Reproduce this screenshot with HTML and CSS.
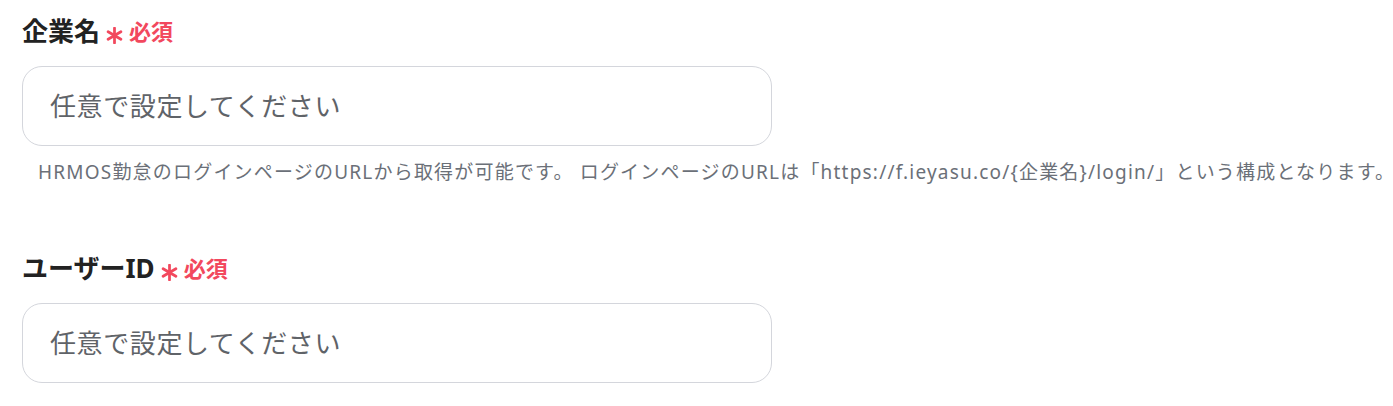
FILE: index.html
```html
<!DOCTYPE html>
<html lang="ja">
<head>
<meta charset="utf-8">
<link rel="stylesheet" href="styles.css">
</head>
<body>
<form class="form">
  <div class="field">
    <label class="label"><span class="label-text">企業名</span><svg class="req-mark" viewBox="0 0 16 16" width="17" height="17" aria-hidden="true"><path d="M8 1v14M2 4.5l12 7M14 4.5l-12 7" stroke="currentColor" stroke-width="2.6" stroke-linecap="round" fill="none"/></svg><span class="req">必須</span></label>
    <input class="input" type="text" placeholder="任意で設定してください">
    <p class="help">HRMOS勤怠のログインページのURLから取得が可能です。 ログインページのURLは「https://f.ieyasu.co/{企業名}/login/」という構成となります。</p>
  </div>
  <div class="field field-second">
    <label class="label"><span class="label-text">ユーザーID</span><svg class="req-mark" viewBox="0 0 16 16" width="17" height="17" aria-hidden="true"><path d="M8 1v14M2 4.5l12 7M14 4.5l-12 7" stroke="currentColor" stroke-width="2.6" stroke-linecap="round" fill="none"/></svg><span class="req">必須</span></label>
    <input class="input" type="text" placeholder="任意で設定してください">
  </div>
</form>
</body>
</html>
```
FILE: styles.css
```css
html, body {
  margin: 0;
  padding: 0;
  background: #ffffff;
  overflow: hidden;
}
body {
  font-family: "Noto Sans", "Noto Sans CJK JP", sans-serif;
  color: #222;
}
.form {
  padding: 15px 0 0 22px;
}
.field {
  display: flex;
  flex-direction: column;
  align-items: flex-start;
}
.field-second {
  margin-top: 67px;
}
.label {
  display: flex;
  align-items: center;
  height: 32px;
}
.label-text {
  font-size: 26px;
  font-weight: 700;
  line-height: 32px;
  color: #222;
}
.req-mark {
  color: #f2485d;
  margin: 8px 6px 0 6px;
  flex: none;
}
.req {
  color: #f2485d;
  font-size: 22px;
  font-weight: 700;
  line-height: 32px;
}
.input {
  box-sizing: border-box;
  width: 750px;
  height: 80px;
  margin-top: 19px;
  border: 1px solid #d4d6dc;
  border-radius: 20px;
  padding: 0 27px;
  font-family: inherit;
  font-size: 26px;
  letter-spacing: 0.6px;
  color: #333;
  background: #fff;
  outline: none;
}
.input::placeholder {
  color: #5f6368;
}
.help {
  margin: 13px 0 0 16px;
  font-size: 19px;
  letter-spacing: 1.2px;
  line-height: 26px;
  color: #6b7078;
  white-space: nowrap;
}
```
